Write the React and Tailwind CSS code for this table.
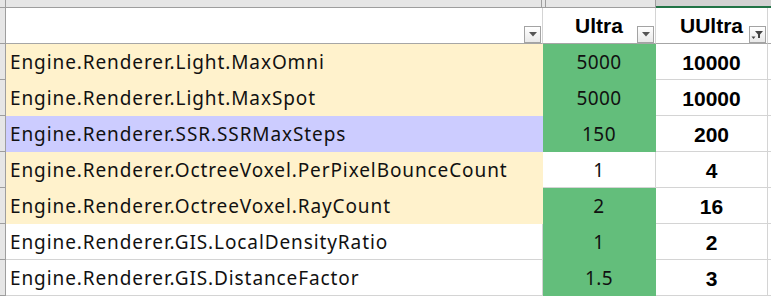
const rows = [
  { name: "Engine.Renderer.Light.MaxOmni", bg: "bg-[#fff2cc]", v: "5000", green: true, b: "10000" },
  { name: "Engine.Renderer.Light.MaxSpot", bg: "bg-[#fff2cc]", v: "5000", green: true, b: "10000" },
  { name: "Engine.Renderer.SSR.SSRMaxSteps", bg: "bg-[#ccccff]", v: "150", green: true, b: "200" },
  { name: "Engine.Renderer.OctreeVoxel.PerPixelBounceCount", bg: "bg-[#fff2cc]", v: "1", green: false, b: "4" },
  { name: "Engine.Renderer.OctreeVoxel.RayCount", bg: "bg-[#fff2cc]", v: "2", green: true, b: "16" },
  { name: "Engine.Renderer.GIS.LocalDensityRatio", bg: "", v: "1", green: true, b: "2" },
  { name: "Engine.Renderer.GIS.DistanceFactor", bg: "", v: "1.5", green: true, b: "3" },
];

const FilterBtn = ({ active }) => (
  <div className="absolute right-[1px] bottom-0 w-[17px] h-[17px] border border-[#a3a3a3] bg-gradient-to-b from-white to-[#e9e9e9] flex items-center justify-center">
    {active ? (
      <svg width="13" height="11" viewBox="0 0 13 11">
        <path d="M4 2h8L9 5.5V9H7V5.5z" fill="#444" />
        <path d="M0.5 7.5h4L2.5 10z" fill="#444" />
      </svg>
    ) : (
      <svg width="8" height="5" viewBox="0 0 8 5">
        <path d="M0 0h8L4 4.5z" fill="#555" />
      </svg>
    )}
  </div>
);

const nameFont = { fontFamily: '"Noto Sans", "Noto Sans CJK JP", sans-serif' };
const boldFont = { fontFamily: '"Liberation Sans", Arial, sans-serif' };

export default function App() {
  return (
    <div className="w-[771px] h-[299px] overflow-hidden bg-white">
      {/* column header strip */}
      <div className="grid grid-cols-[6px_536px_4px_110px_1fr] h-[8px]">
        <div className="bg-[#e6e6e6] border-r border-b border-[#9e9e9e]" />
        <div className="bg-[#e6e6e6] border-r border-b border-[#9e9e9e]" />
        <div className="bg-[#e6e6e6] border-r border-b border-[#9e9e9e]" />
        <div className="bg-[#e6e6e6] border-r border-b border-[#9e9e9e]" />
        <div className="bg-[#d2d2d2] border-b-2 border-[#217346]" />
      </div>

      {/* header row */}
      <div className="grid grid-cols-[6px_537px_113px_112px_1fr] h-[36px]">
        <div className="bg-[#e6e6e6] border-r border-b border-[#9e9e9e]" />
        <div className="relative border-r border-[#d4d4d4] border-b border-b-[#a6a6a6]">
          <FilterBtn />
        </div>
        <div
          className="relative border-r border-[#d4d4d4] border-b border-b-[#a6a6a6] flex items-center justify-center font-bold text-[21px] text-black"
          style={boldFont}
        >
          Ultra
          <FilterBtn />
        </div>
        <div
          className="relative border-r border-[#d4d4d4] border-b border-b-[#a6a6a6] flex items-center justify-center font-bold text-[21px] text-black"
          style={boldFont}
        >
          UUltra
          <FilterBtn active />
        </div>
        <div className="border-b border-[#a6a6a6]" />
      </div>

      {rows.map((r) => (
        <div key={r.name} className="grid grid-cols-[6px_537px_113px_112px_1fr] h-[36px]">
          <div className="bg-[#e6e6e6] border-r border-b border-[#9e9e9e]" />
          <div
            className={`flex items-center pl-[4px] pt-[2px] text-[19px] tracking-[0.9px] text-[#111] border-r border-b ${
              r.bg ? `${r.bg} border-transparent` : "border-[#d4d4d4]"
            }`}
            style={nameFont}
          >
            {r.name}
          </div>
          <div
            className={`flex items-center justify-center pt-[2px] text-[19px] tracking-[0.4px] text-[#111] border-r border-b ${
              r.green ? "bg-[#63be7b] border-[#63be7b]" : "border-[#d4d4d4]"
            }`}
            style={nameFont}
          >
            {r.v}
          </div>
          <div
            className="flex items-center justify-center pt-[2px] font-bold text-[21px] text-black border-r border-b border-[#d4d4d4]"
            style={boldFont}
          >
            {r.b}
          </div>
          <div className="border-b border-[#d4d4d4]" />
        </div>
      ))}
    </div>
  );
}
